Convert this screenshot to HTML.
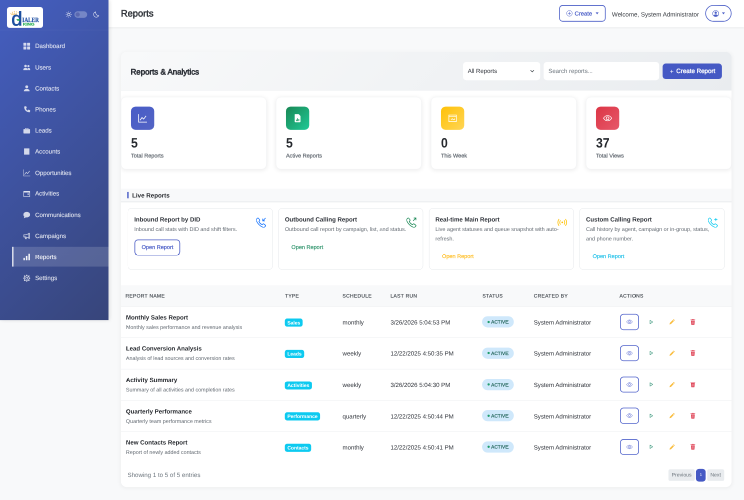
<!DOCTYPE html>
<html lang="en">
<head>
<meta charset="utf-8">
<title>Reports</title>
<style>
*{box-sizing:border-box;margin:0;padding:0}
html,body{width:744px;height:500px;overflow:hidden;background:#f8f9fa}
body{font-family:"Liberation Sans",sans-serif;color:#212529;text-rendering:geometricPrecision}
#ss{position:absolute;left:0;top:0;width:1488px;height:1000px;transform:scale(0.5);transform-origin:0 0;will-change:transform;overflow:hidden;background:#f8f9fa}
#wrap{position:absolute;left:0;top:0;width:1920px;height:1291px;transform:scale(0.775);transform-origin:0 0;background:#f8f9fa;overflow:hidden}
svg.ic{display:inline-block;vertical-align:middle;flex:none}
/* sidebar */
#sidebar{position:absolute;left:0;top:0;width:280px;height:826px;background:linear-gradient(135deg,#445ec0 0%,#37457a 100%);box-shadow:2px 0 10px rgba(0,0,0,.12);z-index:5}
#logo{position:absolute;left:18px;top:18px;width:93px;height:54px;background:#fff;border-radius:7px;overflow:hidden}
#theme{position:absolute;left:169px;top:27px;height:20px;display:flex;align-items:center;color:#fff}
#theme .tog{display:block;width:33px;height:17px;border-radius:9px;background:rgba(255,255,255,.28);margin:0 15px 0 6px;position:relative}
#theme .tog i{position:absolute;left:3px;top:3px;width:11px;height:11px;border-radius:50%;background:#5a68b0}
#sline{position:absolute;left:0;top:77px;width:280px;height:1px;background:rgba(255,255,255,.08)}
.nav{position:absolute;left:0;top:92.6px;width:280px}
.nav a{display:flex;align-items:center;position:relative;height:51.6px;margin-bottom:2.8px;color:rgba(255,255,255,.84);font-size:15.8px;padding-left:60px;-webkit-text-stroke:.2px rgba(255,255,255,.84);text-decoration:none;white-space:nowrap}
.nav a svg{margin-right:12.5px;margin-top:2px;opacity:.93}
.nav a span{padding-top:4px}
.nav a.active{margin-left:31px;padding-left:25px;background:rgba(255,255,255,.15);border-left:4px solid rgba(255,255,255,.75);color:#fff}
/* header */
#header{position:absolute;left:280px;top:0;width:1640px;height:70px;background:#fff;box-shadow:0 2px 5px rgba(0,0,0,.06);z-index:4}
#header h1{position:absolute;left:32px;top:1px;line-height:70px;font-size:24px;font-weight:400;color:#2c3036;-webkit-text-stroke:1px #2c3036}
#hcreate{position:absolute;left:1163px;top:13px;width:120px;height:43px;border:2px solid #4c5fc7;border-radius:9px;color:#4c5fc7;font-size:15px;display:flex;align-items:center;justify-content:center;-webkit-text-stroke:.5px #4c5fc7}
#hcreate span{margin:2px 9px 0 5px}
.caret{display:block;width:0;height:0;border-left:4.5px solid transparent;border-right:4.5px solid transparent;border-top:5px solid #4c5fc7}
#hwelcome{position:absolute;left:1299px;top:2.5px;line-height:69px;font-size:15.9px;color:#33373d;white-space:nowrap}
#huser{position:absolute;left:1540px;top:13px;width:68px;height:43px;border:2px solid #4c5fc7;border-radius:22px;display:flex;align-items:center;justify-content:center}
#huser svg{margin-right:7px}
/* card */
#card{position:absolute;left:312px;top:134px;width:1576px;height:1123px;background:#fff;border-radius:15px;box-shadow:0 2px 12px rgba(0,0,0,.06);overflow:hidden}
#chead{position:absolute;left:0;top:0;width:100%;height:100px;background:linear-gradient(135deg,#f8f9fa 0%,#e9ecef 100%);border-bottom:1px solid #e9ecef}
#ctitle{position:absolute;left:25px;top:1.5px;line-height:101px;font-size:20.4px;color:#2d3138;-webkit-text-stroke:1.4px #2d3138;white-space:nowrap}
#csel{position:absolute;left:883px;top:26px;width:199px;height:47px;background:#fff;border-radius:8px;font-size:15.5px;line-height:50px;padding-left:12px;color:#2d3138}
#csel svg{position:absolute;right:14px;top:17px}
#csearch{position:absolute;left:1091px;top:26px;width:298px;height:47px;background:#fff;border-radius:8px;font-size:15.5px;line-height:50px;padding-left:12px;color:#6c757d}
#cbtn{position:absolute;left:1398px;top:30px;width:153px;height:40px;background:#4559c4;border-radius:8px;color:#fff;font-size:16px;display:flex;align-items:center;justify-content:center;-webkit-text-stroke:.7px #fff}
#cbtn svg{margin-right:5px}
/* stats */
.stat{position:absolute;top:116px;width:376px;height:187px;background:#fff;border-radius:13px;box-shadow:0 2px 12px rgba(0,0,0,.08);border:1px solid #f1f2f4}
.sicon{position:absolute;left:25px;top:24px;width:60px;height:60px;border-radius:12px;display:flex;align-items:center;justify-content:center}
.s1{background:linear-gradient(135deg,#485cc7,#5364c4)}
.s2{background:linear-gradient(135deg,#198754,#20c997)}
.s3{background:linear-gradient(135deg,#ffc107,#ffd555)}
.s4{background:linear-gradient(135deg,#dc3545,#e6586a)}
.snum{position:absolute;left:25px;top:98px;font-size:35px;font-weight:700;line-height:40px;color:#25282d;transform:scaleX(.9);transform-origin:0 0}
.slab{position:absolute;left:25px;top:141px;font-size:14.3px;line-height:20px;color:#646b73;white-space:nowrap;-webkit-text-stroke:.5px #646b73}
/* live */
#lhead{position:absolute;left:0;top:353px;width:100%;height:33.5px;background:#f8f9fa}
#lhead i{position:absolute;left:16px;top:8px;width:4px;height:17px;background:#4c5fc7;border-radius:1px}
#lhead span{position:absolute;left:29px;top:1.5px;line-height:34px;font-size:16px;font-weight:700;color:#25282d}
#lline{position:absolute;left:0;top:386px;width:100%;height:1.5px;background:#e4e7ea}
.live{position:absolute;top:403px;width:374.4px;height:158.5px;border:1px solid #dde1e5;border-radius:10px;background:#fff}
.ltitle{position:absolute;left:16px;top:17px;font-size:15.7px;font-weight:700;line-height:24px;color:#2d3138;white-space:nowrap}
.ldesc{position:absolute;left:16px;top:41px;font-size:14.1px;line-height:24px;color:#636a72;white-space:nowrap}
.lbtn{position:absolute;left:15px;width:118px;height:41px;border-radius:9px;font-size:14.3px;line-height:41px;text-align:center;border:2px solid transparent;-webkit-text-stroke:.5px currentColor;white-space:nowrap}
.lbtn.outlined{border-color:#4a5cc4;border-width:2.3px;line-height:36.4px;left:17px;margin-top:2px}
.licon{position:absolute;right:16px;top:22.5px;width:26px;height:26px}
.licon svg{display:block}
/* table */
#thead{position:absolute;left:0;top:601.5px;width:100%;height:56.5px;background:#f8f9fa;border-bottom:1px solid #eceef0}
#thead span{position:absolute;top:0;line-height:56px;font-size:12.8px;letter-spacing:.75px;color:#444a50;white-space:nowrap;-webkit-text-stroke:.4px #444a50}
.row{position:absolute;left:0;width:100%;height:80.7px;border-bottom:1px solid #e7eaed}
.row.last{border-bottom:0}
.rname{position:absolute;left:13px;top:18px;font-size:15.7px;font-weight:700;line-height:22px;color:#25282d;white-space:nowrap}
.rdesc{position:absolute;left:13px;top:43px;font-size:13.8px;line-height:20px;color:#636a72;white-space:nowrap}
.rtype{position:absolute;left:423px;top:30.5px;height:21px}
.rtype span{display:block;height:21px;padding:0 6.5px;background:#0dcaf0;border-radius:6px;color:#fff;font-size:12.8px;font-weight:700;line-height:21px;white-space:nowrap}
.rtxt{position:absolute;top:0;line-height:83px;font-size:15.7px;color:#2d3138;white-space:nowrap}
.rstat{position:absolute;left:932px;top:24.5px;width:82px;height:29px;border-radius:15px;background:#cfe8fb;color:#12584a;font-size:12.3px;line-height:31px;padding-left:23.5px;-webkit-text-stroke:.35px #12584a;white-space:nowrap}
.rstat i{position:absolute;left:13.5px;top:11.5px;width:6px;height:6px;border-radius:50%;background:#1f9d6b}
.rview{position:absolute;left:1287.5px;top:18.5px;width:49.5px;height:41.6px;border:2px solid #5365cb;border-radius:9px;display:flex;align-items:center;justify-content:center}
.ract{position:absolute;top:-1px;height:80px;width:20px;display:flex;align-items:center;justify-content:center}
#finfo{position:absolute;left:17px;top:1081px;font-size:15.9px;line-height:24px;color:#6c757d;white-space:nowrap}
#pager{position:absolute;right:19px;top:1077px;height:30px;display:flex;font-size:13.3px;line-height:30px}
#pager span{display:block;height:30px;text-align:center;margin-left:3.4px;border-radius:5px;background:#e9ecef;color:#6c757d}
#pager .pp{width:67.5px}
#pager .pn{width:44.5px}
#pager .pc{background:#4559c4;color:#fff;width:25px;height:33px;margin-top:-1.5px;line-height:33px;border-radius:8px;font-size:10.5px}

</style>
</head>
<body>
<div id="ss"><div id="wrap">
  <div id="sidebar">
    <div id="logo">
      <svg width="93" height="54" viewBox="0 0 93 54">
        <g fill="#f2c46a"><circle cx="10" cy="16.500" r="1.300"/><circle cx="14" cy="13.500" r="1.300"/><circle cx="19" cy="11.500" r="1.400"/><circle cx="24.500" cy="12.500" r="1.300"/><circle cx="29" cy="15" r="1.300"/><path d="M11 21l-1.500-4 3.500 2 1.500-5 3 4.500 2.500-6 2 6 3.500-3.500.5 5z" opacity=".75"/></g>
        <text x="11.5" y="47.3" font-family="Liberation Sans, sans-serif" font-size="51" fill="#1c4f9f" stroke="#1c4f9f" stroke-width="1.2" style="text-transform:lowercase">D</text>
        <path d="M24 31.500h9.500v4H27z" fill="#21a356"/>
        <text x="39.5" y="38.5" font-family="Liberation Serif, serif" font-weight="bold" font-size="17" fill="#1f4fa3" stroke="#1f4fa3" stroke-width=".4" textLength="43" lengthAdjust="spacingAndGlyphs">IALER</text>
        <text x="41" y="47.300" font-family="Liberation Sans, sans-serif" font-weight="bold" font-size="9.500" fill="#2fb257" stroke="#2fb257" stroke-width=".5" textLength="30" lengthAdjust="spacingAndGlyphs">KING</text>
      </svg>
    </div>
    <div id="theme"><svg class="ic" width="17" height="17" viewBox="0 0 16 16" fill="rgba(255,255,255,.85)" style="color:rgba(255,255,255,.85);"><circle cx="8" cy="8" r="3" fill="none" stroke="currentColor" stroke-width="1.300"/><path stroke="currentColor" stroke-width="1.300" stroke-linecap="round" d="M8 1v1.600M8 13.400V15M1 8h1.600M13.400 8H15M3 3l1.200 1.200M11.800 11.800 13 13M3 13l1.200-1.200M11.800 4.200 13 3"/></svg><span class="tog"><i></i></span><svg class="ic" width="17" height="17" viewBox="0 0 16 16" fill="rgba(255,255,255,.85)" style="color:rgba(255,255,255,.85);"><path fill="none" stroke="currentColor" stroke-width="1.300" d="M6.500 1.500C5.500 6 8.500 10.500 14 10.700 12.800 13 10.500 14.500 8 14.500 4.400 14.500 1.500 11.600 1.500 8c0-3 2-5.700 5-6.500z"/></svg></div>
    <div id="sline"></div>
    <div class="nav">
      <a><svg class="ic" width="18" height="18" viewBox="0.8 0.8 14.4 14.4" fill="currentColor" style="color:currentColor;"><rect x="1" y="1" width="6.2" height="6.2" rx=".8"/><rect x="8.8" y="1" width="6.2" height="6.2" rx=".8"/><rect x="1" y="8.8" width="6.2" height="6.2" rx=".8"/><rect x="8.8" y="8.8" width="6.2" height="6.2" rx=".8"/></svg><span>Dashboard</span></a>
      <a><svg class="ic" width="18" height="18" viewBox="0.8 0.8 14.4 14.4" fill="currentColor" style="color:currentColor;"><circle cx="5.5" cy="5" r="2.6"/><circle cx="11.5" cy="5.3" r="2.2"/><path d="M0.5 13.5c0-3 2.2-4.6 5-4.6s5 1.6 5 4.6z"/><path d="M11 13.5c0-2-.6-3.3-1.6-4.2.6-.3 1.3-.4 2.1-.4 2.4 0 4 1.5 4 4.6z"/></svg><span>Users</span></a>
      <a><svg class="ic" width="18" height="18" viewBox="0.8 0.8 14.4 14.4" fill="currentColor" style="color:currentColor;"><circle cx="8" cy="4.8" r="3"/><path d="M2 14c0-3.2 2.7-5 6-5s6 1.8 6 5z"/></svg><span>Contacts</span></a>
      <a><svg class="ic" width="18" height="18" viewBox="0.8 0.8 14.4 14.4" fill="currentColor" style="color:currentColor;"><path d="M3.6 1.2 5.9.6c.5-.1.9.1 1.1.6l1 2.5c.2.4.1.9-.3 1.2L6.400 6c.8 1.700 2 2.900 3.700 3.700l1.100-1.300c.3-.4.8-.5 1.200-.3l2.500 1c.5.200.7.600.6 1.100l-.600 2.300c-.1.500-.5.800-1 .800C7.300 13.300 2.700 8.700 2.700 2.200c0-.5.400-.900.900-1z"/></svg><span>Phones</span></a>
      <a><svg class="ic" width="18" height="18" viewBox="0.8 0.8 14.4 14.4" fill="currentColor" style="color:currentColor;"><path d="M5.500 2.500h5c.600 0 1 .400 1 1v1h-1.300v-.700H5.800v.700H4.500v-1c0-.600.400-1 1-1z"/><rect x="1" y="5" width="14" height="9" rx="1.200"/></svg><span>Leads</span></a>
      <a><svg class="ic" width="18" height="18" viewBox="0.8 0.8 14.4 14.4" fill="currentColor" style="color:currentColor;"><path d="M3 1.500h10c.300 0 .500.200.500.500v12.500h-11V2c0-.300.200-.500.500-.500z"/></svg><span>Accounts</span></a>
      <a><svg class="ic" width="18" height="18" viewBox="0.8 0.8 14.4 14.4" fill="currentColor" style="color:currentColor;"><path fill="none" stroke="currentColor" stroke-width="1.300" d="M1.200 1v13.800H15.500M3.500 11.500l3.500-4.500 2.800 2.500 4.200-5.500"/></svg><span>Opportunities</span></a>
      <a><svg class="ic" width="18" height="18" viewBox="0.8 0.8 14.4 14.4" fill="currentColor" style="color:currentColor;"><path fill="none" stroke="currentColor" stroke-width="1.400" d="M1.700 3.200h12.600v10.600H1.700z"/><rect x="1.700" y="2.500" width="12.600" height="3"/><rect x="9.500" y="7.500" width="3" height="2.500"/></svg><span>Activities</span></a>
      <a><svg class="ic" width="18" height="18" viewBox="0.8 0.8 14.4 14.4" fill="currentColor" style="color:currentColor;"><path d="M8 1.500c4 0 7 2.500 7 5.700s-3 5.700-7 5.700c-.700 0-1.400-.1-2-.200-1 .800-2.400 1.500-4.200 1.700.800-1 1.200-2 1.300-2.900C1.800 10.400 1 8.900 1 7.200c0-3.200 3-5.700 7-5.700z"/></svg><span>Communications</span></a>
      <a><svg class="ic" width="18" height="18" viewBox="0.8 0.8 14.4 14.4" fill="currentColor" style="color:currentColor;"><path fill="none" stroke="currentColor" stroke-width="1.400" d="M12.800 2v11.500M12.800 3.200 5.500 5.500H2v4.300h3.500l7.300 2.400M4.200 9.800l1 4h2l-1-4"/><rect x="12" y="1.500" width="2" height="12.500" rx=".5"/></svg><span>Campaigns</span></a>
      <a class="active"><svg class="ic" width="18" height="18" viewBox="0.8 0.8 14.4 14.4" fill="currentColor" style="color:currentColor;"><rect x="1" y="10" width="3.200" height="5"/><rect x="6.200" y="6" width="3.200" height="9"/><rect x="11.400" y="1.500" width="3.200" height="13.500"/></svg><span>Reports</span></a>
      <a><svg class="ic" width="18" height="18" viewBox="0.8 0.8 14.4 14.4" fill="currentColor" style="color:currentColor;"><circle cx="8" cy="8" r="5" fill="none" stroke="currentColor" stroke-width="1.300"/><circle cx="8" cy="8" r="2.200" fill="none" stroke="currentColor" stroke-width="1.200"/><path stroke="currentColor" stroke-width="2.400" stroke-linecap="round" d="M8 1.400v.8M8 13.800v.8M1.400 8h.8M13.800 8h.8M3.350 3.350l.55.55M12.100 12.100l.55.55M3.350 12.650l.55-.55M12.100 3.900l.55-.55"/></svg><span>Settings</span></a>
    </div>
  </div>
  <div id="header">
    <h1>Reports</h1>
    <div id="hcreate"><svg class="ic" width="17" height="17" viewBox="0 0 16 16" fill="#4c5fc7" style="color:#4c5fc7;"><circle cx="8" cy="8" r="6.800" fill="none" stroke="currentColor" stroke-width="1.100"/><path d="M7.400 4.200h1.200v3.200h3.200v1.200H8.600v3.200H7.400V8.600H4.200V7.400h3.200z"/></svg><span>Create</span><b class="caret"></b></div>
    <div id="hwelcome">Welcome, System Administrator</div>
    <div id="huser"><svg class="ic" width="18" height="18" viewBox="0 0 16 16" fill="#4c5fc7" style="color:#4c5fc7;"><circle cx="8" cy="8" r="7" fill="none" stroke="currentColor" stroke-width="1.200"/><circle cx="8" cy="6" r="2.700"/><path d="M3.200 12.600c1-1.900 2.700-2.800 4.800-2.800s3.800.9 4.800 2.800c-1.200 1.400-2.900 2.200-4.800 2.200s-3.600-.8-4.800-2.200z"/></svg><b class="caret"></b></div>
  </div>
  <div id="card">
    <div id="chead">
      <div id="ctitle">Reports &amp; Analytics</div>
      <div id="csel"><span>All Reports</span><svg class="ic" width="13" height="13" viewBox="0 0 16 16" fill="#343a40" style="color:#343a40;"><path fill="none" stroke="currentColor" stroke-width="2" stroke-linecap="round" stroke-linejoin="round" d="M3 5.500l5 5 5-5"/></svg></div>
      <div id="csearch">Search reports...</div>
      <div id="cbtn"><svg class="ic" width="13" height="13" viewBox="0 0 16 16" fill="#fff" style="color:#fff;"><path d="M7.200 3h1.600v4.200H13v1.600H8.800V13H7.200V8.800H3V7.200h4.200z"/></svg><span>Create Report</span></div>
    </div>
    <div class="stat" style="left:0px">
      <div class="sicon s1"><svg class="ic" width="24" height="24" viewBox="0 0 16 16" fill="#fff" style="color:#fff;"><path fill="none" stroke="currentColor" stroke-width="1.300" d="M1.200 1v13.800H15.500M3.500 11.500l3.500-4.500 2.800 2.500 4.200-5.500"/></svg></div>
      <div class="snum">5</div>
      <div class="slab">Total Reports</div>
    </div>
    <div class="stat" style="left:400px">
      <div class="sicon s2"><svg class="ic" width="24" height="24" viewBox="0 0 16 16" fill="#fff" style="color:#fff;"><path d="M3.500 1h6.300L13 4.200V14c0 .600-.400 1-1 1H4c-.600 0-1-.400-1-1V2c0-.600.400-1 .500-1z"/><path fill="#1c9a63" d="M5.200 13v-2.500h1.400V13zm2.100 0V8h1.400v5zm2.100 0V9.500h1.400V13z"/></svg></div>
      <div class="snum">5</div>
      <div class="slab">Active Reports</div>
    </div>
    <div class="stat" style="left:800px">
      <div class="sicon s3"><svg class="ic" width="24" height="24" viewBox="0 0 16 16" fill="#fff" style="color:#fff;"><path fill="none" stroke="currentColor" stroke-width="1.200" d="M1.600 2.600h12.800v11.300H1.600zM1.600 5.200h12.800M5 9.800h2.500V8M8.500 10.500h2.500V8.500"/></svg></div>
      <div class="snum">0</div>
      <div class="slab">This Week</div>
    </div>
    <div class="stat" style="left:1200px">
      <div class="sicon s4"><svg class="ic" width="24" height="24" viewBox="0 0 16 16" fill="#fff" style="color:#fff;"><path fill="none" stroke="currentColor" stroke-width="1.200" d="M1 8c1.800-3 4.200-4.500 7-4.500S13.200 5 15 8c-1.800 3-4.200 4.500-7 4.500S2.800 11 1 8z"/><circle cx="8" cy="8" r="2.400" fill="none" stroke="currentColor" stroke-width="1.200"/></svg></div>
      <div class="snum">37</div>
      <div class="slab">Total Views</div>
    </div>
    <div id="lhead"><i></i><span>Live Reports</span></div>
    <div id="lline"></div>
    <div class="live" style="left:17.4px">
      <div class="ltitle">Inbound Report by DID</div>
      <div class="ldesc">Inbound call stats with DID and shift filters.</div>
      <div class="lbtn lb1 outlined" style="color:#4c5fc7;top:78px">Open Report</div>
      <div class="licon"><svg class="ic" width="26" height="26" viewBox="0 0 16 16" fill="#0d6efd" style="color:#0d6efd;"><path fill="none" stroke="currentColor" stroke-width="1.100" d="M3.600 1.300 5.600 3.900c.3.400.3.900-.1 1.300L4.400 6.500c.9 2 2.900 4 5.100 5.100l1.300-1.100c.4-.4.900-.4 1.300-.1l2.600 2c.5.400.5 1 .1 1.500l-1.100 1.100c-.8.800-2 1-3 .6C6.400 14 2 9.600.4 5.300c-.4-1-.2-2.200.6-3l1.100-1.100c.5-.4 1.100-.4 1.500.1z"/><path fill="none" stroke="currentColor" stroke-width="1.100" d="M15 1l-4.500 4.500M10.500 2v3.500H14"/></svg></div>
    </div>
    <div class="live" style="left:406.0px">
      <div class="ltitle">Outbound Calling Report</div>
      <div class="ldesc">Outbound call report by campaign, list, and status.</div>
      <div class="lbtn lb2" style="color:#3b9a74;top:78px">Open Report</div>
      <div class="licon"><svg class="ic" width="26" height="26" viewBox="0 0 16 16" fill="#198754" style="color:#198754;"><path fill="none" stroke="currentColor" stroke-width="1.100" d="M3.600 1.300 5.600 3.900c.3.400.3.900-.1 1.300L4.400 6.500c.9 2 2.900 4 5.100 5.100l1.300-1.100c.4-.4.900-.4 1.300-.1l2.600 2c.5.400.5 1 .1 1.500l-1.100 1.100c-.8.800-2 1-3 .6C6.400 14 2 9.600.4 5.300c-.4-1-.2-2.200.6-3l1.100-1.100c.5-.4 1.100-.4 1.500.1z"/><path fill="none" stroke="currentColor" stroke-width="1.100" d="M10.500 5.500 15 1M11.500 1H15v3.500"/></svg></div>
    </div>
    <div class="live" style="left:794.6px">
      <div class="ltitle">Real-time Main Report</div>
      <div class="ldesc">Live agent statuses and queue snapshot with auto-<br>refresh.</div>
      <div class="lbtn lb3" style="color:#ffc233;top:101.5px">Open Report</div>
      <div class="licon"><svg class="ic" width="26" height="26" viewBox="0 0 16 16" fill="#ffc107" style="color:#ffc107;"><path fill="none" stroke="currentColor" stroke-width="1.200" d="M3 2.500C1.700 4 1 5.900 1 8s.7 4 2 5.500M5.200 4.500C4.400 5.500 4 6.700 4 8s.4 2.500 1.200 3.500M13 2.500c1.300 1.500 2 3.400 2 5.500s-.7 4-2 5.500M10.800 4.500c.8 1 1.200 2.200 1.200 3.500s-.4 2.500-1.200 3.500"/><circle cx="8" cy="8" r="1.400"/></svg></div>
    </div>
    <div class="live" style="left:1183.2px">
      <div class="ltitle">Custom Calling Report</div>
      <div class="ldesc">Call history by agent, campaign or in-group, status,<br>and phone number.</div>
      <div class="lbtn lb4" style="color:#2ec4ea;top:101.5px">Open Report</div>
      <div class="licon"><svg class="ic" width="26" height="26" viewBox="0 0 16 16" fill="#0dcaf0" style="color:#0dcaf0;"><path fill="none" stroke="currentColor" stroke-width="1.100" d="M3.600 1.300 5.600 3.900c.3.400.3.900-.1 1.300L4.400 6.500c.9 2 2.900 4 5.100 5.100l1.300-1.100c.4-.4.900-.4 1.300-.1l2.600 2c.5.400.5 1 .1 1.500l-1.100 1.100c-.8.800-2 1-3 .6C6.400 14 2 9.600.4 5.300c-.4-1-.2-2.200.6-3l1.100-1.100c.5-.4 1.100-.4 1.500.1z"/><path fill="none" stroke="currentColor" stroke-width="1.100" d="M12.500 1v5M10 3.500h5"/></svg></div>
    </div>
    <div id="thead">
      <span style="left:12px">REPORT NAME</span>
      <span style="left:423.5px">TYPE</span>
      <span style="left:572px">SCHEDULE</span>
      <span style="left:695.7px">LAST RUN</span>
      <span style="left:933px">STATUS</span>
      <span style="left:1065.4px">CREATED BY</span>
      <span style="left:1286.7px">ACTIONS</span>
    </div>
    <div class="row" style="top:657.6px">
      <div class="rname">Monthly Sales Report</div>
      <div class="rdesc">Monthly sales performance and revenue analysis</div>
      <div class="rtype"><span>Sales</span></div>
      <div class="rtxt" style="left:572px">monthly</div>
      <div class="rtxt" style="left:695.7px">3/26/2026 5:04:53 PM</div>
      <div class="rstat"><i></i>ACTIVE</div>
      <div class="rtxt" style="left:1065.4px">System Administrator</div>
      <div class="rview"><svg class="ic" width="17" height="17" viewBox="0 0 16 16" fill="#5a6bd0" style="color:#5a6bd0;"><path fill="none" stroke="currentColor" stroke-width="1.200" d="M1 8c1.800-3 4.200-4.500 7-4.500S13.200 5 15 8c-1.800 3-4.200 4.500-7 4.500S2.800 11 1 8z"/><circle cx="8" cy="8" r="2.400" fill="none" stroke="currentColor" stroke-width="1.200"/></svg></div>
      <div class="ract" style="left:1358.5px"><svg class="ic" width="14" height="14" viewBox="0 0 16 16" fill="#4a9f86" style="color:#4a9f86;"><path fill="none" stroke="currentColor" stroke-width="1.700" stroke-linejoin="round" d="M4 3 12 8l-8 5z"/></svg></div>
      <div class="ract" style="left:1412px"><svg class="ic" width="17" height="17" viewBox="0 0 16 16" fill="#f9bc3c" style="color:#f9bc3c;"><path d="M11.800 1.500 14.500 4.200 13 5.700 10.300 3zM9.600 3.700l2.700 2.700-7 7L1.500 14.500l1.100-3.800z"/></svg></div>
      <div class="ract" style="left:1466px"><svg class="ic" width="16" height="16" viewBox="0 0 16 16" fill="#e04a5c" style="color:#e04a5c;"><path d="M6 .5h4l.600 1H14v1.700H2V1.500h3.400zM3 4.300h10l-.800 10.200c0 .600-.500 1-1 1H4.800c-.500 0-1-.400-1-1z"/><path stroke="#fff" stroke-opacity=".55" stroke-width=".9" d="M6 6.500v6.500M8 6.500v6.500M10 6.500v6.500"/></svg></div>
    </div>
    <div class="row" style="top:738.3px">
      <div class="rname">Lead Conversion Analysis</div>
      <div class="rdesc">Analysis of lead sources and conversion rates</div>
      <div class="rtype"><span>Leads</span></div>
      <div class="rtxt" style="left:572px">weekly</div>
      <div class="rtxt" style="left:695.7px">12/22/2025 4:50:35 PM</div>
      <div class="rstat"><i></i>ACTIVE</div>
      <div class="rtxt" style="left:1065.4px">System Administrator</div>
      <div class="rview"><svg class="ic" width="17" height="17" viewBox="0 0 16 16" fill="#5a6bd0" style="color:#5a6bd0;"><path fill="none" stroke="currentColor" stroke-width="1.200" d="M1 8c1.800-3 4.200-4.500 7-4.500S13.200 5 15 8c-1.800 3-4.200 4.500-7 4.500S2.800 11 1 8z"/><circle cx="8" cy="8" r="2.400" fill="none" stroke="currentColor" stroke-width="1.200"/></svg></div>
      <div class="ract" style="left:1358.5px"><svg class="ic" width="14" height="14" viewBox="0 0 16 16" fill="#4a9f86" style="color:#4a9f86;"><path fill="none" stroke="currentColor" stroke-width="1.700" stroke-linejoin="round" d="M4 3 12 8l-8 5z"/></svg></div>
      <div class="ract" style="left:1412px"><svg class="ic" width="17" height="17" viewBox="0 0 16 16" fill="#f9bc3c" style="color:#f9bc3c;"><path d="M11.800 1.500 14.500 4.200 13 5.700 10.300 3zM9.600 3.700l2.700 2.700-7 7L1.500 14.500l1.100-3.800z"/></svg></div>
      <div class="ract" style="left:1466px"><svg class="ic" width="16" height="16" viewBox="0 0 16 16" fill="#e04a5c" style="color:#e04a5c;"><path d="M6 .5h4l.600 1H14v1.700H2V1.500h3.400zM3 4.300h10l-.800 10.200c0 .600-.500 1-1 1H4.800c-.500 0-1-.400-1-1z"/><path stroke="#fff" stroke-opacity=".55" stroke-width=".9" d="M6 6.500v6.500M8 6.500v6.500M10 6.500v6.500"/></svg></div>
    </div>
    <div class="row" style="top:819.0px">
      <div class="rname">Activity Summary</div>
      <div class="rdesc">Summary of all activities and completion rates</div>
      <div class="rtype"><span>Activities</span></div>
      <div class="rtxt" style="left:572px">weekly</div>
      <div class="rtxt" style="left:695.7px">3/26/2026 5:04:30 PM</div>
      <div class="rstat"><i></i>ACTIVE</div>
      <div class="rtxt" style="left:1065.4px">System Administrator</div>
      <div class="rview"><svg class="ic" width="17" height="17" viewBox="0 0 16 16" fill="#5a6bd0" style="color:#5a6bd0;"><path fill="none" stroke="currentColor" stroke-width="1.200" d="M1 8c1.800-3 4.200-4.500 7-4.500S13.200 5 15 8c-1.800 3-4.200 4.500-7 4.500S2.800 11 1 8z"/><circle cx="8" cy="8" r="2.400" fill="none" stroke="currentColor" stroke-width="1.200"/></svg></div>
      <div class="ract" style="left:1358.5px"><svg class="ic" width="14" height="14" viewBox="0 0 16 16" fill="#4a9f86" style="color:#4a9f86;"><path fill="none" stroke="currentColor" stroke-width="1.700" stroke-linejoin="round" d="M4 3 12 8l-8 5z"/></svg></div>
      <div class="ract" style="left:1412px"><svg class="ic" width="17" height="17" viewBox="0 0 16 16" fill="#f9bc3c" style="color:#f9bc3c;"><path d="M11.800 1.500 14.500 4.200 13 5.700 10.300 3zM9.600 3.700l2.700 2.700-7 7L1.500 14.500l1.100-3.800z"/></svg></div>
      <div class="ract" style="left:1466px"><svg class="ic" width="16" height="16" viewBox="0 0 16 16" fill="#e04a5c" style="color:#e04a5c;"><path d="M6 .5h4l.600 1H14v1.700H2V1.500h3.400zM3 4.300h10l-.800 10.200c0 .600-.500 1-1 1H4.800c-.500 0-1-.400-1-1z"/><path stroke="#fff" stroke-opacity=".55" stroke-width=".9" d="M6 6.500v6.500M8 6.500v6.500M10 6.500v6.500"/></svg></div>
    </div>
    <div class="row" style="top:899.7px">
      <div class="rname">Quarterly Performance</div>
      <div class="rdesc">Quarterly team performance metrics</div>
      <div class="rtype"><span>Performance</span></div>
      <div class="rtxt" style="left:572px">quarterly</div>
      <div class="rtxt" style="left:695.7px">12/22/2025 4:50:44 PM</div>
      <div class="rstat"><i></i>ACTIVE</div>
      <div class="rtxt" style="left:1065.4px">System Administrator</div>
      <div class="rview"><svg class="ic" width="17" height="17" viewBox="0 0 16 16" fill="#5a6bd0" style="color:#5a6bd0;"><path fill="none" stroke="currentColor" stroke-width="1.200" d="M1 8c1.800-3 4.200-4.500 7-4.500S13.200 5 15 8c-1.800 3-4.200 4.500-7 4.500S2.800 11 1 8z"/><circle cx="8" cy="8" r="2.400" fill="none" stroke="currentColor" stroke-width="1.200"/></svg></div>
      <div class="ract" style="left:1358.5px"><svg class="ic" width="14" height="14" viewBox="0 0 16 16" fill="#4a9f86" style="color:#4a9f86;"><path fill="none" stroke="currentColor" stroke-width="1.700" stroke-linejoin="round" d="M4 3 12 8l-8 5z"/></svg></div>
      <div class="ract" style="left:1412px"><svg class="ic" width="17" height="17" viewBox="0 0 16 16" fill="#f9bc3c" style="color:#f9bc3c;"><path d="M11.800 1.500 14.500 4.200 13 5.700 10.300 3zM9.600 3.700l2.700 2.700-7 7L1.500 14.500l1.100-3.800z"/></svg></div>
      <div class="ract" style="left:1466px"><svg class="ic" width="16" height="16" viewBox="0 0 16 16" fill="#e04a5c" style="color:#e04a5c;"><path d="M6 .5h4l.600 1H14v1.700H2V1.500h3.400zM3 4.300h10l-.800 10.200c0 .600-.500 1-1 1H4.800c-.500 0-1-.400-1-1z"/><path stroke="#fff" stroke-opacity=".55" stroke-width=".9" d="M6 6.500v6.500M8 6.500v6.500M10 6.500v6.500"/></svg></div>
    </div>
    <div class="row last" style="top:980.4px">
      <div class="rname">New Contacts Report</div>
      <div class="rdesc">Report of newly added contacts</div>
      <div class="rtype"><span>Contacts</span></div>
      <div class="rtxt" style="left:572px">monthly</div>
      <div class="rtxt" style="left:695.7px">12/22/2025 4:50:41 PM</div>
      <div class="rstat"><i></i>ACTIVE</div>
      <div class="rtxt" style="left:1065.4px">System Administrator</div>
      <div class="rview"><svg class="ic" width="17" height="17" viewBox="0 0 16 16" fill="#5a6bd0" style="color:#5a6bd0;"><path fill="none" stroke="currentColor" stroke-width="1.200" d="M1 8c1.800-3 4.200-4.500 7-4.500S13.200 5 15 8c-1.800 3-4.200 4.500-7 4.500S2.800 11 1 8z"/><circle cx="8" cy="8" r="2.400" fill="none" stroke="currentColor" stroke-width="1.200"/></svg></div>
      <div class="ract" style="left:1358.5px"><svg class="ic" width="14" height="14" viewBox="0 0 16 16" fill="#4a9f86" style="color:#4a9f86;"><path fill="none" stroke="currentColor" stroke-width="1.700" stroke-linejoin="round" d="M4 3 12 8l-8 5z"/></svg></div>
      <div class="ract" style="left:1412px"><svg class="ic" width="17" height="17" viewBox="0 0 16 16" fill="#f9bc3c" style="color:#f9bc3c;"><path d="M11.800 1.500 14.500 4.200 13 5.700 10.300 3zM9.600 3.700l2.700 2.700-7 7L1.500 14.500l1.100-3.800z"/></svg></div>
      <div class="ract" style="left:1466px"><svg class="ic" width="16" height="16" viewBox="0 0 16 16" fill="#e04a5c" style="color:#e04a5c;"><path d="M6 .5h4l.600 1H14v1.700H2V1.500h3.400zM3 4.300h10l-.800 10.200c0 .600-.500 1-1 1H4.800c-.500 0-1-.400-1-1z"/><path stroke="#fff" stroke-opacity=".55" stroke-width=".9" d="M6 6.500v6.500M8 6.500v6.500M10 6.500v6.500"/></svg></div>
    </div>
    <div id="finfo">Showing 1 to 5 of 5 entries</div>
    <div id="pager"><span class="pp">Previous</span><span class="pc">1</span><span class="pn">Next</span></div>
  </div>
</div></div>
</body>
</html>
